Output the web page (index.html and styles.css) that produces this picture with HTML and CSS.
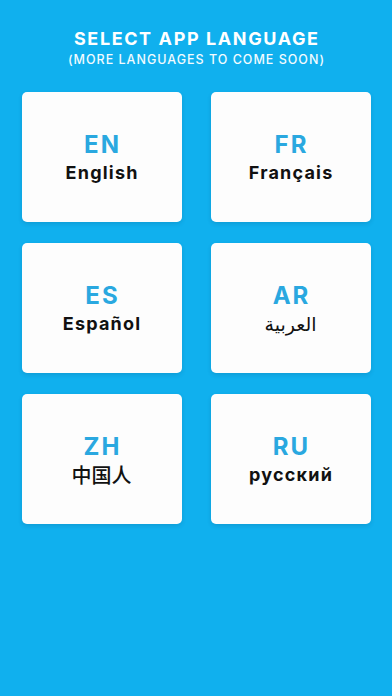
FILE: index.html
```html
<!DOCTYPE html>
<html lang="en">
<head>
  <meta charset="UTF-8" />
  <title>Select App Language</title>
  <link rel="stylesheet" href="styles.css">
</head>
<body>
  <div class="screen">
    <div class="header">
      <div class="title">SELECT APP LANGUAGE</div>
      <div class="subtitle">(MORE LANGUAGES TO COME SOON)</div>
    </div>
    <div class="lang-grid">
      <button class="lang-card">
        <span class="lang-code">EN</span>
        <span class="lang-name">English</span>
      </button>
      <button class="lang-card">
        <span class="lang-code">FR</span>
        <span class="lang-name">Français</span>
      </button>
      <button class="lang-card">
        <span class="lang-code">ES</span>
        <span class="lang-name">Español</span>
      </button>
      <button class="lang-card">
        <span class="lang-code">AR</span>
        <span class="lang-name lang-ar" lang="ar">العربية</span>
      </button>
      <button class="lang-card">
        <span class="lang-code">ZH</span>
        <span class="lang-name lang-zh" lang="zh">中国人</span>
      </button>
      <button class="lang-card">
        <span class="lang-code">RU</span>
        <span class="lang-name" lang="ru">русский</span>
      </button>
    </div>
  </div>
</body>
</html>
```

FILE: styles.css
```css
html, body {
  margin: 0;
  padding: 0;
  width: 100%;
  height: 100%;
  background-color: #10b0ee;
  font-family: Inter, "Noto Sans", sans-serif;
  overflow: hidden;
}
.screen {
  display: flex;
  flex-direction: column;
  align-items: center;
  padding-top: 28px;
  box-sizing: border-box;
}
.header {
  display: flex;
  flex-direction: column;
  align-items: center;
  color: white;
  margin-bottom: 24px;
}
.title {
  font-size: 18px;
  font-weight: 700;
  line-height: 22px;
  letter-spacing: 1.6px;
  margin-right: -1.6px;
}
.subtitle {
  font-size: 12.5px;
  font-weight: 500;
  line-height: 16px;
  margin-top: 2px;
  letter-spacing: 1px;
  margin-right: -1px;
  color: #f2fbff;
}
.lang-grid {
  display: grid;
  grid-template-columns: 160px 160px;
  grid-auto-rows: 130px;
  column-gap: 29px;
  row-gap: 21px;
}
.lang-card {
  display: flex;
  flex-direction: column;
  align-items: center;
  justify-content: center;
  background: #fdfdfd;
  border: none;
  border-radius: 5px;
  box-shadow: 0 2px 4px rgba(0, 40, 80, 0.14);
  padding: 0;
  cursor: pointer;
  font-family: inherit;
}
.lang-code {
  font-size: 24px;
  font-weight: 700;
  color: #2aa8e0;
  line-height: 30px;
  letter-spacing: 2px;
  margin-right: -2px;
}
.lang-name {
  font-size: 18px;
  font-weight: 700;
  color: #111;
  line-height: 24px;
  margin-top: 1px;
  letter-spacing: 1.2px;
  margin-right: -1.2px;
}
.lang-ar {
  font-family: "DejaVu Sans", "Noto Sans", sans-serif;
  font-size: 19px;
  font-weight: 400;
  letter-spacing: 0;
  margin-right: 0;
}
.lang-zh {
  font-family: "Noto Sans CJK SC", sans-serif;
  font-size: 20px;
  font-weight: 500;
  letter-spacing: 0;
  margin-right: 0;
}
```
